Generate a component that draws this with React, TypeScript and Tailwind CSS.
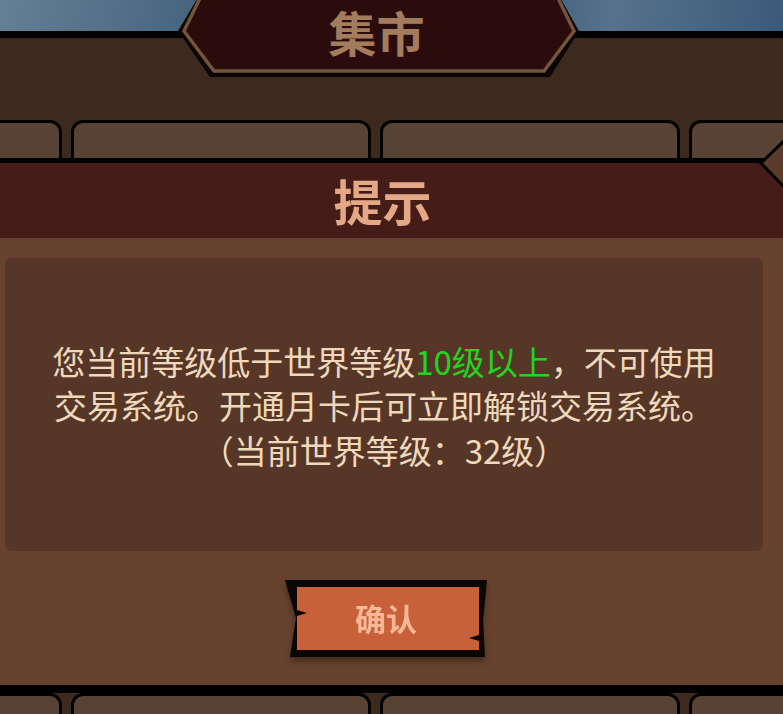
import React from 'react';

const tabRow = (height: string) => (
  <div className={`flex gap-[9px] ml-[-238px] ${height} overflow-hidden`}>
    {[0, 1, 2, 3].map((i) => (
      <div
        key={i}
        className="w-[300px] shrink-0 h-[60px] rounded-t-[12px] border-[3px] border-black bg-[#574233]"
      />
    ))}
  </div>
);

const App: React.FC = () => {
  return (
    <div className="relative w-[783px] h-[714px] overflow-hidden bg-[#3d2a1f] font-['Noto_Sans_CJK_SC','Noto_Sans',sans-serif]">
      {/* backdrop: sky, frame and tabs */}
      <div className="h-[31px] bg-[linear-gradient(100deg,#647f96_0%,#506d85_18%,#3a5874_35%,#2f4e6c_55%,#56728c_78%,#3b5a7a_100%)]" />
      <div className="h-[7px] bg-black" />
      <div className="h-[82px]" />
      {tabRow('h-[38px]')}
      <div className="h-[5px] bg-black" />

      {/* dialog */}
      <div className="h-[75px] bg-[#461c19] flex items-center justify-center pr-[18px]">
        <span className="text-[49px] font-semibold leading-none text-[#e3a987] pb-[2px]">提示</span>
      </div>
      <div className="h-[447px] bg-[#67432f] pt-[20px]">
        <div className="ml-[5px] w-[758px] h-[293px] rounded-[6px] border-t-2 border-[#61302a] bg-[#563727] flex flex-col items-center justify-center text-[33px] leading-[44.5px] text-[#f0d8bd]">
          <div className="whitespace-nowrap">
            您当前等级低于世界等级<span className="text-[#22d31f]">10级以上</span>，不可使用
          </div>
          <div className="whitespace-nowrap">交易系统。开通月卡后可立即解锁交易系统。</div>
          <div className="whitespace-nowrap">（当前世界等级：32级）</div>
        </div>
        <div className="flex justify-center mt-[29px] pr-[11px]">
          <button className="relative w-[202px] h-[77px] drop-shadow-[0_4px_3px_rgba(0,0,0,0.35)]">
            <svg className="absolute inset-0" width="202" height="77" viewBox="0 0 202 77">
              <polygon points="0,0 202,0 198,40 200,77 5,77 11,38" fill="#0b0504" />
              <rect x="12" y="7" width="182" height="63" fill="#c8613a" />
              <polygon points="12,30 22,33 12,36" fill="#0b0504" />
              <polygon points="194,55 184,58 194,61" fill="#0b0504" />
            </svg>
            <span className="relative text-[31px] font-bold text-[#f6b797] leading-none">确认</span>
          </button>
        </div>
      </div>
      <div className="h-[8px] bg-black" />
      {tabRow('h-[21px]')}

      {/* banner */}
      <div className="absolute left-[178px] top-0 w-[402px] h-[78px]">
        <svg className="absolute inset-0" width="402" height="78" viewBox="0 0 402 78">
          <polygon points="22,-6 380,-6 401,31 372,77 32,77 0,31" fill="#0b0504" />
          <polygon points="23,-4 379,-4 396,31 366,71 36,71 6,31" fill="#2a0c0c" stroke="#74543a" strokeWidth="3.5" />
        </svg>
        <div className="relative flex justify-center pr-[5px]">
          <span className="block text-[48px] font-semibold leading-[62px] text-[#a37b5d]">集市</span>
        </div>
      </div>

      {/* right edge notch */}
      <svg className="absolute left-[758px] top-[138px]" width="25" height="52" viewBox="0 0 25 52">
        <polygon points="27,2 3,25 27,50" fill="#5b3c2c" stroke="#000" strokeWidth="3" />
      </svg>
    </div>
  );
};

export default App;
